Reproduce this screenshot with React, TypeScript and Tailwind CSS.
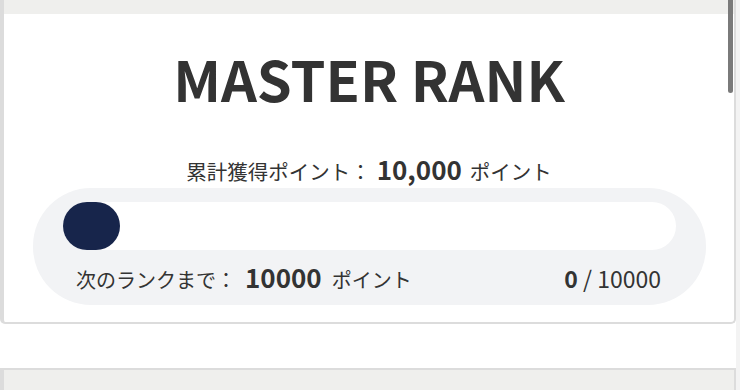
import React from "react";

const jp = "font-['Noto_Sans_CJK_JP','Noto_Sans',sans-serif]";

function ProgressPanel({ current, target }: { current: number; target: number }) {
  const pct = Math.min(100, (current / target) * 100);
  return (
    <div className="ml-[29px] mr-[28px] mt-[6px] rounded-[58px] bg-[#f2f3f5] px-[30px] pt-[14px] pb-[15px]">
      <div className="h-[48px] w-full rounded-full bg-white">
        <div
          className="h-[48px] min-w-[57px] rounded-full bg-[#17254b]"
          style={{ width: `${pct}%` }}
        />
      </div>
      <div className="mt-[14px] flex items-baseline justify-between pl-[13px] pr-[15px] text-[#333]">
        <p className="text-[20px] leading-none">
          次のランクまで：
          <span className="ml-[9px] mr-[10px] text-[26px] font-bold">10000</span>
          ポイント
        </p>
        <p className="text-[23px] leading-none">
          <span className="font-bold">{current}</span> / {target}
        </p>
      </div>
    </div>
  );
}

export default function App() {
  return (
    <div className={`relative flex h-[390px] w-[740px] overflow-hidden bg-white ${jp}`}>
      <div className="flex w-[736px] flex-col">
        {/* ランクカード */}
        <div className="h-[324px] rounded-b-[5px] border-b-2 border-l-4 border-r-2 border-[#dcdcdc] bg-white">
          <div className="h-[14px] bg-[#efefed]" />
          <h1 className="mt-[36px] text-center text-[56px] font-bold leading-none text-[#333]">
            MASTER RANK
          </h1>
          <p className="mt-[50px] text-center text-[20.5px] leading-none text-[#333]">
            累計獲得ポイント：
            <span className="ml-[6px] mr-[8px] text-[26px] font-bold">10,000</span>
            ポイント
          </p>
          <ProgressPanel current={0} target={10000} />
        </div>

        {/* 次のカード */}
        <div className="mt-[44px] flex-1 border-l-4 border-r-2 border-t-2 border-[#dcdcdc] bg-[#efefed]" />
      </div>
      <div className="w-[4px] bg-[#f3f3f3]" />

      {/* スクロールバー */}
      <div className="absolute right-[7px] top-0 h-[93px] w-[5px] rounded-b-full bg-[#7a7a7a]" />
    </div>
  );
}
